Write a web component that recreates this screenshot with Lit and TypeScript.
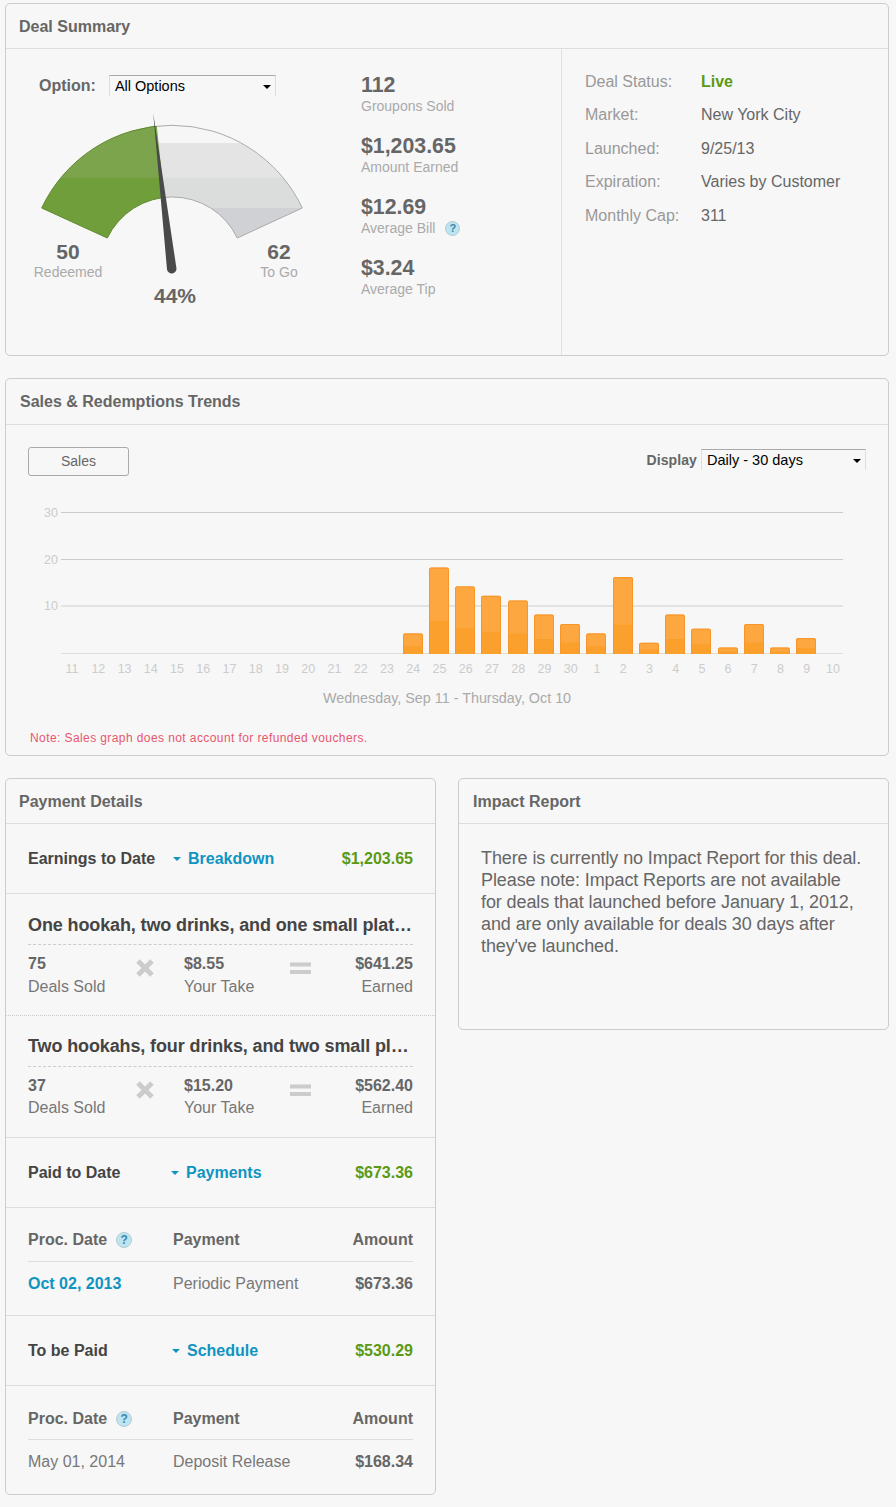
import { LitElement, html, svg, css } from "lit";
import { customElement } from "lit/decorators.js";

const STATS = [
  { value: "112", label: "Groupons Sold" },
  { value: "$1,203.65", label: "Amount Earned" },
  { value: "$12.69", label: "Average Bill", help: true },
  { value: "$3.24", label: "Average Tip" },
];

const STATUS = [
  { label: "Deal Status:", value: "Live", live: true },
  { label: "Market:", value: "New York City" },
  { label: "Launched:", value: "9/25/13" },
  { label: "Expiration:", value: "Varies by Customer" },
  { label: "Monthly Cap:", value: "311" },
];

const DAYS = [11, 12, 13, 14, 15, 16, 17, 18, 19, 20, 21, 22, 23, 24, 25, 26, 27, 28, 29, 30, 1, 2, 3, 4, 5, 6, 7, 8, 9, 10];
const SALES = [0, 0, 0, 0, 0, 0, 0, 0, 0, 0, 0, 0, 0, 4, 18, 14, 12, 11, 8, 6, 4, 16, 2, 8, 5, 1, 6, 1, 3, 0];

const DEALS = [
  { title: "One hookah, two drinks, and one small plat…", sold: "75", take: "$8.55", earned: "$641.25" },
  { title: "Two hookahs, four drinks, and two small pl…", sold: "37", take: "$15.20", earned: "$562.40" },
];

const BASE_Y = 654;
const UNIT = 4.7;

@customElement("app-root")
export class AppRoot extends LitElement {
  static styles = css`
    :host {
      display: block;
      width: 896px;
      height: 1507px;
      box-sizing: border-box;
      padding: 3px 7px 0 5px;
      background: #f7f7f7;
      font-family: "Liberation Sans", Arial, sans-serif;
      color: #666;
    }

    .card {
      border: 1px solid #ccc;
      border-radius: 5px;
      box-sizing: border-box;
    }

    .card-head {
      font-size: 16px;
      font-weight: bold;
      color: #666;
      height: 44px;
      line-height: 45px;
      padding-left: 13px;
      border-bottom: 1px solid #ddd;
    }

    .summary {
      height: 353px;
    }

    .summary-body {
      display: flex;
      height: 306px;
    }

    .gauge-col {
      width: 355px;
      flex: none;
    }

    .option-row {
      display: flex;
      align-items: center;
      gap: 13px;
      padding: 26px 0 0 33px;
    }

    .option-label {
      font-size: 16px;
      font-weight: bold;
    }

    .fake-select {
      box-sizing: border-box;
      height: 21px;
      line-height: 20px;
      padding-left: 5px;
      font-size: 14.5px;
      color: #000;
      border-top: 1px solid #aaa;
      border-left: 1px solid #ddd;
      border-right: 1px solid #ddd;
      position: relative;
    }

    .fake-select::after {
      content: "";
      position: absolute;
      right: 4px;
      top: 9px;
      border: 4px solid transparent;
      border-top-color: #000;
      border-bottom: 0;
    }

    .option-row .fake-select {
      width: 167px;
    }

    .gauge {
      display: block;
      margin-top: 4px;
    }

    .stats-col {
      width: 201px;
      flex: none;
      box-sizing: border-box;
      padding-top: 25px;
      border-right: 1px solid #e2e2e2;
    }

    .stat {
      height: 61px;
    }

    .stat-value {
      font-size: 21.3px;
      font-weight: bold;
      line-height: 23px;
    }

    .stat-label {
      font-size: 14px;
      line-height: 18px;
      color: #aaa;
      display: flex;
      align-items: center;
      gap: 10px;
    }

    .help {
      width: 15px;
      height: 15px;
      box-sizing: border-box;
      border-radius: 50%;
      border: 1px solid #b5ccd4;
      background: #bce4f1;
      color: #3f86ab;
      font-size: 11px;
      font-weight: bold;
      line-height: 13px;
      text-align: center;
      flex: none;
    }

    .status-col {
      padding: 23px 0 0 23px;
    }

    .status-row {
      display: flex;
      height: 33.4px;
      line-height: 20px;
      font-size: 16px;
    }

    .status-label {
      width: 116px;
      color: #999;
    }

    .status-value {
      color: #666;
    }

    .status-value.live {
      color: #5b9a14;
      font-weight: bold;
    }

    .trends {
      margin-top: 22px;
      height: 378px;
    }

    .trends .card-head {
      height: 45px;
      padding-left: 14px;
    }

    .toolbar {
      display: flex;
      justify-content: space-between;
      padding: 22px 22px 0 22px;
      height: 65px;
      box-sizing: border-box;
    }

    .tab {
      box-sizing: border-box;
      width: 101px;
      height: 29px;
      line-height: 27px;
      text-align: center;
      font-size: 14px;
      border: 1px solid #aaa;
      border-radius: 3px;
    }

    .display {
      display: flex;
      gap: 4px;
      padding-top: 2px;
    }

    .display-label {
      font-size: 14px;
      font-weight: bold;
      letter-spacing: 0.1px;
      line-height: 23px;
    }

    .display .fake-select {
      width: 165px;
    }

    .chart {
      display: block;
    }

    .note {
      font-size: 12px;
      letter-spacing: 0.41px;
      color: #e8566e;
      padding: 21px 0 0 24px;
    }

    .columns {
      display: flex;
      justify-content: space-between;
      align-items: flex-start;
      margin-top: 22px;
    }

    .payment {
      width: 431px;
      height: 717px;
    }

    .impact {
      width: 431px;
      height: 252px;
    }

    .impact .card-head {
      padding-left: 14px;
    }

    .impact-text {
      font-size: 18px;
      line-height: 22px;
      letter-spacing: -0.1px;
      padding: 23px 0 0 22px;
      white-space: nowrap;
    }

    .money-row {
      display: flex;
      align-items: center;
      height: 69px;
      padding: 0 22px;
      font-size: 16px;
      font-weight: bold;
      border-bottom: 1px solid #ddd;
    }

    .money-title {
      color: #444;
    }

    .money-link {
      flex: 1;
      color: #0f94c2;
      display: flex;
      align-items: center;
      gap: 7px;
    }

    .money-link::before {
      content: "";
      border: 4px solid transparent;
      border-top-color: #0f94c2;
      border-bottom: 0;
    }

    .money-amount {
      color: #5b9a14;
    }

    .deal {
      padding: 0 22px;
      height: 122px;
      box-sizing: border-box;
      border-bottom: 1px dotted #ccc;
    }

    .deal.last {
      border-bottom: 1px solid #ddd;
    }

    .deal-title {
      font-size: 18px;
      font-weight: bold;
      color: #444;
      height: 50px;
      line-height: 62px;
      letter-spacing: -0.12px;
      border-bottom: 1px dashed #ccc;
      white-space: nowrap;
    }

    .deal.last .deal-title {
      line-height: 60px;
    }

    .deal-grid {
      display: grid;
      grid-template-columns: 107px 49px 106px 48px 1fr;
      padding-top: 7px;
      font-size: 16px;
      line-height: 23px;
    }

    .deal-grid b {
      display: block;
    }

    .deal-grid span {
      display: block;
      color: #777;
    }

    .deal.last .deal-grid span {
      line-height: 21px;
    }

    .deal-end {
      text-align: right;
    }

    .op {
      display: block;
      margin-top: 6px;
    }

    .pay-table {
      padding: 0 22px;
      height: 108px;
      box-sizing: border-box;
      font-size: 16px;
      border-bottom: 1px solid #ddd;
    }

    .pay-table.last {
      border-bottom: 0;
    }

    .pay-head,
    .pay-row {
      display: grid;
      grid-template-columns: 145px 1fr auto;
      align-items: center;
    }

    .pay-head {
      height: 54px;
      padding-top: 10px;
      box-sizing: border-box;
      font-weight: bold;
      border-bottom: 1px solid #ddd;
    }

    .pay-table.last .pay-head {
      padding-top: 12px;
    }

    .pay-head > div:first-child {
      display: flex;
      align-items: center;
      gap: 9px;
    }

    .pay-head .help {
      width: 16px;
      height: 16px;
      line-height: 14px;
      font-size: 12px;
      font-weight: bold;
    }

    .pay-row {
      height: 44px;
      color: #777;
    }

    .pay-amount {
      color: #666;
      font-weight: bold;
    }

    .pay-link {
      color: #0f94c2;
      font-weight: bold;
    }
  `;

  private renderGauge() {
    const clip = "M41.7 208 A144 144 0 0 1 302.3 208 L237.3 238 A72 72 0 0 0 107.3 238 Z";
    return html`<svg class="gauge" width="355" height="210" viewBox="6 100 355 210">
      <defs>
        <clipPath id="band"><path d=${clip}></path></clipPath>
        <clipPath id="left"><path d="M0 100 H154 L172 269 V320 H0 Z"></path></clipPath>
        <clipPath id="right"><path d="M154 100 L172 269 V320 H340 V100 Z"></path></clipPath>
      </defs>
      <g clip-path="url(#right)">
        <g clip-path="url(#band)">
          <rect x="40" y="120" width="270" height="23" fill="#f6f6f6"></rect>
          <rect x="40" y="143" width="270" height="35" fill="#e4e4e4"></rect>
          <rect x="40" y="178" width="270" height="30" fill="#dbdcdc"></rect>
          <rect x="40" y="208" width="270" height="32" fill="#cfd1d4"></rect>
        </g>
        <path d=${clip} fill="none" stroke="#aaa" stroke-width="1"></path>
      </g>
      <g clip-path="url(#left)">
        <g clip-path="url(#band)">
          <rect x="40" y="120" width="270" height="58" fill="#7ba44d"></rect>
          <rect x="40" y="178" width="270" height="62" fill="#6f9e3a"></rect>
        </g>
        <path d=${clip} fill="none" stroke="#5f8a30" stroke-width="1"></path>
      </g>
      <path d="M153.2 113 L176.4 268 A4.7 4.7 0 0 1 167 269.5 Z" fill="#4a4a4a"></path>
      <text x="68" y="259" text-anchor="middle" font-size="21" font-weight="bold" fill="#666">50</text>
      <text x="68" y="277" text-anchor="middle" font-size="14" fill="#aaa">Redeemed</text>
      <text x="279" y="259" text-anchor="middle" font-size="21" font-weight="bold" fill="#666">62</text>
      <text x="279" y="277" text-anchor="middle" font-size="14" fill="#aaa">To Go</text>
      <text x="175" y="303" text-anchor="middle" font-size="21" font-weight="bold" fill="#666">44%</text>
    </svg>`;
  }

  private renderChart() {
    const x = (i: number) => 71.6 + i * 26.24;
    return html`<svg class="chart" width="882" height="220" viewBox="6 490 882 220">
      ${[
        [512.5, 30, "#ccc", 1],
        [559.5, 20, "#ccc", 1],
        [606, 10, "#e3e3e3", 2],
      ].map(
        ([y, label, color, w]) => svg`
          <line x1="61" x2="843" y1=${y} y2=${y} stroke=${color} stroke-width=${w}></line>
          <text x="58" y=${(y as number) + 4} text-anchor="end" font-size="12.5" fill="#ccc">${label}</text>`
      )}
      <line x1="61" x2="843" y1="653.5" y2="653.5" stroke="#ddd"></line>
      ${SALES.map((v, i) => {
        if (!v) return null;
        const h = v * UNIT + 1.8;
        const dark = h * 0.38;
        const left = Math.round(x(i) - 10);
        return svg`
          <path d="M${left} ${BASE_Y} V${BASE_Y - h + 2} Q${left} ${BASE_Y - h} ${left + 2} ${BASE_Y - h} H${left + 18} Q${left + 20} ${BASE_Y - h} ${left + 20} ${BASE_Y - h + 2} V${BASE_Y} Z" fill="#fca73f"></path>
          <rect x=${left} y=${BASE_Y - dark} width="20" height=${dark} fill="#fb9f2d"></rect>
          <path d="M${left + 0.5} ${BASE_Y} V${BASE_Y - h + 2} Q${left + 0.5} ${BASE_Y - h + 0.5} ${left + 2} ${BASE_Y - h + 0.5} H${left + 18} Q${left + 19.5} ${BASE_Y - h + 0.5} ${left + 19.5} ${BASE_Y - h + 2} V${BASE_Y}" fill="none" stroke="#f8962a"></path>`;
      })}
      ${DAYS.map(
        (d, i) => svg`<text x=${x(i) + 0.5} y="673" text-anchor="middle" font-size="12.5" fill="#ccc">${d}</text>`
      )}
      <text x="447" y="703" text-anchor="middle" font-size="14.35" fill="#aaa">Wednesday, Sep 11 - Thursday, Oct 10</text>
    </svg>`;
  }

  private renderTable(link: boolean, last: boolean, date: string, payment: string, amount: string) {
    return html`<div class="pay-table ${last ? "last" : ""}">
      <div class="pay-head">
        <div>Proc. Date <span class="help">?</span></div>
        <div>Payment</div>
        <div>Amount</div>
      </div>
      <div class="pay-row">
        <div class=${link ? "pay-link" : ""}>${date}</div>
        <div>${payment}</div>
        <div class="pay-amount">${amount}</div>
      </div>
    </div>`;
  }

  private renderMoney(title: string, titleWidth: number, linkText: string, amount: string) {
    return html`<div class="money-row">
      <div class="money-title" style="width:${titleWidth}px">${title}</div>
      <div class="money-link">${linkText}</div>
      <div class="money-amount">${amount}</div>
    </div>`;
  }

  render() {
    return html`
      <section class="card summary">
        <div class="card-head">Deal Summary</div>
        <div class="summary-body">
          <div class="gauge-col">
            <div class="option-row">
              <span class="option-label">Option:</span>
              <div class="fake-select">All Options</div>
            </div>
            ${this.renderGauge()}
          </div>
          <div class="stats-col">
            ${STATS.map(
              (s) => html`<div class="stat">
                <div class="stat-value">${s.value}</div>
                <div class="stat-label">${s.label}${s.help ? html`<span class="help">?</span>` : null}</div>
              </div>`
            )}
          </div>
          <div class="status-col">
            ${STATUS.map(
              (s) => html`<div class="status-row">
                <div class="status-label">${s.label}</div>
                <div class="status-value ${s.live ? "live" : ""}">${s.value}</div>
              </div>`
            )}
          </div>
        </div>
      </section>

      <section class="card trends">
        <div class="card-head">Sales &amp; Redemptions Trends</div>
        <div class="toolbar">
          <div class="tab">Sales</div>
          <div class="display">
            <span class="display-label">Display</span>
            <div class="fake-select">Daily - 30 days</div>
          </div>
        </div>
        ${this.renderChart()}
        <div class="note">Note: Sales graph does not account for refunded vouchers.</div>
      </section>

      <div class="columns">
        <section class="card payment">
          <div class="card-head">Payment Details</div>
          ${this.renderMoney("Earnings to Date", 145, "Breakdown", "$1,203.65")}
          ${DEALS.map(
            (d, i) => html`<div class="deal ${i === DEALS.length - 1 ? "last" : ""}">
              <div class="deal-title">${d.title}</div>
              <div class="deal-grid">
                <div><b>${d.sold}</b><span>Deals Sold</span></div>
                <svg class="op" width="20" height="20" viewBox="0 0 20 20">
                  <path d="M3 3 L17 17 M17 3 L3 17" stroke="#ccc" stroke-width="5"></path>
                </svg>
                <div><b>${d.take}</b><span>Your Take</span></div>
                <svg class="op" width="21" height="20" viewBox="0 0 21 20">
                  <path d="M0 6.5 H21 M0 14 H21" stroke="#ccc" stroke-width="4"></path>
                </svg>
                <div class="deal-end"><b>${d.earned}</b><span>Earned</span></div>
              </div>
            </div>`
          )}
          ${this.renderMoney("Paid to Date", 143, "Payments", "$673.36")}
          ${this.renderTable(true, false, "Oct 02, 2013", "Periodic Payment", "$673.36")}
          ${this.renderMoney("To be Paid", 144, "Schedule", "$530.29")}
          ${this.renderTable(false, true, "May 01, 2014", "Deposit Release", "$168.34")}
        </section>
        <section class="card impact">
          <div class="card-head">Impact Report</div>
          <div class="impact-text">
            There is currently no Impact Report for this deal.<br />
            Please note: Impact Reports are not available<br />
            for deals that launched before January 1, 2012,<br />
            and are only available for deals 30 days after<br />
            they've launched.
          </div>
        </section>
      </div>
    `;
  }
}
